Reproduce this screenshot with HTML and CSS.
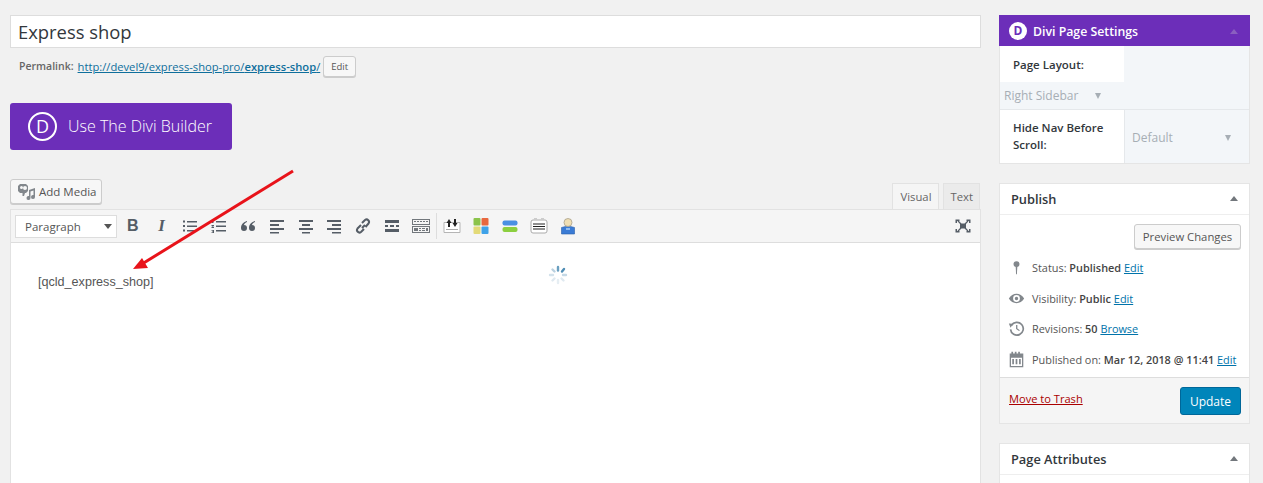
FILE: index.html
```html
<!DOCTYPE html>
<html lang="en">
<head>
  <meta charset="UTF-8" />
  <title>Edit Page</title>
  <link rel="stylesheet" href="styles.css">
</head>
<body>
  <div class="page">
    <!-- Main column -->
    <div class="main">
      <div class="title-box">Express shop</div>
      <div class="permalink">
        <b class="permalink-label">Permalink:</b>
        <a href="#">http://devel9/express-shop-pro/<b>express-shop</b>/</a>
        <span class="btn btn-small">Edit</span>
      </div>

      <div class="divi-btn">
        <span class="divi-logo">D</span>
        <span>Use The Divi Builder</span>
      </div>

      <div class="editor-top">
        <span class="btn btn-media">
          <svg width="20" height="18" viewBox="0 0 20 18"><path fill="#82878c" fill-rule="evenodd" d="M3 1h6l2 2v5l-2 2H8l-1 3H5.500v-3H3L1 8V3zm1.500 2a1.500 1.500 0 1 0 0 3 1.500 1.500 0 0 0 0-3zm3.500 0a2 2 0 1 0 0 4 2 2 0 0 0 0-4z"/><path fill="#82878c" d="M12 7l6-2v9a2 2 0 1 1-1.500-1.900V7.500L13.500 8.500V15a2 2 0 1 1-1.500-1.900z"/></svg>
          Add Media
        </span>
        <div class="tabs">
          <span class="tab tab-on">Visual</span>
          <span class="tab">Text</span>
        </div>
      </div>

      <div class="editor">
        <div class="toolbar">
          <div class="format-select">Paragraph<i class="caret"></i></div>
          <span class="tool tool-b">B</span>
          <span class="tool tool-i">I</span>
          <svg class="tool" viewBox="0 0 20 20"><path d="M7 5h10v1.500H7zM7 9.500h10V11H7zM7 14h10v1.500H7zM3 4.500h2v2H3zM3 9h2v2H3zM3 13.500h2v2H3z"/></svg>
          <svg class="tool" viewBox="0 0 20 20"><path d="M7 5h10v1.500H7zM7 9.500h10V11H7zM7 14h10v1.500H7zM3 4h1.500v3H3zM2.500 9h2.500v1l-1.500 1H5v1H2.500v-1L4 10H2.500zM2.500 14H5v3H2.500v-.8h1.500v-.4h-1v-.6h1v-.4H2.500z"/></svg>
          <svg class="tool" viewBox="0 0 20 20"><path d="M9 5C5.500 6 3 8.500 3 12a3 3 0 1 0 3-3c.3-1.200 1.500-2.300 3-3zM17 5c-3.500 1-6 3.500-6 7a3 3 0 1 0 3-3c.3-1.200 1.500-2.300 3-3z"/></svg>
          <svg class="tool" viewBox="0 0 20 20"><path d="M3 4h14v2H3zM3 8h9v2H3zM3 12h14v2H3zM3 16h9v1.500H3z"/></svg>
          <svg class="tool" viewBox="0 0 20 20"><path d="M3 4h14v2H3zM6 8h8v2H6zM3 12h14v2H3zM6 16h8v1.500H6z"/></svg>
          <svg class="tool" viewBox="0 0 20 20"><path d="M3 4h14v2H3zM8 8h9v2H8zM3 12h14v2H3zM8 16h9v1.500H8z"/></svg>
          <svg class="tool" viewBox="0 0 20 20"><path fill="none" stroke="#555d66" stroke-width="2" d="M9 12l3-3M8 9l-3.500 3.500a2.500 2.500 0 0 0 3.500 3.500L11 13M9 7l3-3a2.500 2.500 0 0 1 3.500 3.500L12.500 11"/></svg>
          <svg class="tool" viewBox="0 0 20 20"><path d="M3 4h14v3H3zM3 9h3v2H3zM8 9h4v2H8zM14 9h3v2h-3zM3 13h14v3H3z"/></svg>
          <svg class="tool tool-kitchen" viewBox="0 0 20 20"><path d="M1 3h18v6H1zm1 1v4h16V4zM1 10h18v7H1zm1 1v5h16v-5z"/><path d="M3 5h2v1H3zM6 5h2v1H6zM9 5h2v1H9zM12 5h2v1h-2zM15 5h2v1h-2zM3 12h4v3H3zM8 12h2v1H8zM8 14h2v1H8zM11 12h3v1h-3zM11 14h3v1h-3zM15 12h2v3h-2z"/></svg>
          <span class="tool-sep"></span>
          <svg class="tool" viewBox="0 0 20 20"><path fill="#fff" stroke="#b5b5b5" d="M2 6.500h16v10H2z"/><path fill="#222" d="M6 3l-2.500 4H5v4h2V7h1.500zM12 11l2.500-4H13V3h-2v4H9.500z" transform="translate(1 0)"/><path fill="#aaa" d="M4 13h12v1H4z"/></svg>
          <svg class="tool" viewBox="0 0 20 20"><rect x="2.500" y="2" width="7" height="7.500" rx="1" fill="#8bc34a"/><rect x="10.500" y="2" width="7" height="7.500" rx="1" fill="#e8683f"/><rect x="2.500" y="10.500" width="7" height="7.500" rx="1" fill="#e3da78"/><rect x="10.500" y="10.500" width="7" height="7.500" rx="1" fill="#3fa2e8"/></svg>
          <svg class="tool" viewBox="0 0 20 20"><rect x="2.500" y="4.500" width="15" height="5" rx="2" fill="#4a90e2"/><rect x="2.500" y="11" width="15" height="5" rx="2" fill="#8ccf3f"/></svg>
          <svg class="tool" viewBox="0 0 20 20"><rect x="2" y="4" width="16" height="13" rx="2" fill="#fff" stroke="#aaa"/><path fill="#222" d="M4 7.500h12v1H4zM4 10h12v1H4zM4 12.500h12v1H4z"/><path fill="#ccc" d="M5 2h3v2H5zM12 2h3v2h-3z"/></svg>
          <svg class="tool" viewBox="0 0 20 20"><path fill="#3a7bd5" stroke="#2a5fa8" stroke-width=".6" d="M3.500 11.500l4-1h5l4 1v6.500h-13z"/><circle cx="10" cy="6.500" r="4" fill="#f0dfb4" stroke="#a8a08a" stroke-width=".8"/><path fill="#8fbcf0" d="M8 12h4v2H8z"/></svg>
          <svg class="tool tool-full" viewBox="0 0 20 20"><path d="M7 7.500h6v5H7z"/><path fill="none" stroke="#555d66" stroke-width="1.300" d="M5 5l3 3M15 5l-3 3M5 15l3-3M15 15l-3-3"/><path d="M2.500 3.500h4v1.500H4v2H2.500zM17.500 3.500h-4v1.500H16v2h1.500zM2.500 16.500h4V15H4v-2H2.500zM17.500 16.500h-4V15H16v-2h1.500z"/></svg>
        </div>
        <div class="editor-body">[qcld_express_shop]</div>
        <!-- Spinner -->
        <svg class="spinner" width="20" height="20" viewBox="0 0 20 20">
          <g stroke-width="2.400" stroke-linecap="round">
            <path stroke="#6a9fc0" d="M10 2v3.500"/>
            <path stroke="#4f8db5" d="M16 4l-2 2.500"/>
            <path stroke="#c5d9e6" d="M18 10h-3"/>
            <path stroke="#dfe9f0" d="M15.500 15.500l-2-2"/>
            <path stroke="#e6eef3" d="M10 18v-3"/>
            <path stroke="#dfe9f0" d="M4.500 15.500l2-2"/>
            <path stroke="#d3e2ec" d="M2 10h3"/>
            <path stroke="#b9d0df" d="M4.500 4.500l2 2"/>
          </g>
        </svg>
      </div>

      <!-- Red arrow drawn on the screenshot -->
      <svg class="arrow" width="180" height="110" viewBox="0 0 180 110">
        <path fill="none" stroke="#e8131a" stroke-width="3" d="M161 2L10 95"/>
        <path fill="#e8131a" d="M1 100L10 89l6 10z"/>
      </svg>
    </div>

    <!-- Sidebar -->
    <div class="side">
      <div class="box">
        <div class="box-head divi-head">
          <span class="divi-dot">D</span>
          <span class="divi-title">Divi Page Settings</span>
          <i class="up up-dim"></i>
        </div>
        <div class="layout-row">
          <div class="cell-label">Page Layout:</div>
          <div class="cell-blank"></div>
        </div>
        <div class="layout-select">
          <span>Right Sidebar</span><i class="down"></i>
        </div>
        <div class="nav-row">
          <div class="cell-label">Hide Nav Before Scroll:</div>
          <div class="cell-value"><span>Default</span><i class="down"></i></div>
        </div>
      </div>

      <div class="box">
        <div class="box-head">
          <span class="box-title">Publish</span>
          <i class="up"></i>
        </div>
        <div class="publish-body">
          <div class="preview-wrap"><span class="btn btn-preview">Preview Changes</span></div>
          <div class="pub-row">
            <svg class="pub-icon" viewBox="0 0 20 20"><circle cx="10" cy="6" r="3.500"/><path d="M9 8h2l-.500 10h-1z"/></svg>
            <span>Status: <b>Published</b> <a href="#">Edit</a></span>
          </div>
          <div class="pub-row">
            <svg class="pub-icon" viewBox="0 0 20 20"><path fill-rule="evenodd" d="M1 10c2-3.500 5.500-5.500 9-5.500s7 2 9 5.500c-2 3.500-5.500 5.500-9 5.500S3 13.500 1 10zm9-4a4 4 0 1 0 0 8 4 4 0 0 0 0-8zm0 2a2 2 0 1 1 0 4 2 2 0 0 1 0-4z"/></svg>
            <span>Visibility: <b>Public</b> <a href="#">Edit</a></span>
          </div>
          <div class="pub-row">
            <svg class="pub-icon" viewBox="0 0 20 20"><path fill="none" stroke="#82878c" stroke-width="2" d="M4 6.500A7.500 7.500 0 1 1 3 11"/><path d="M1 4l5 .5L3 9zM9.500 6H11v4l3 2-1 1-3.500-2.500z"/></svg>
            <span>Revisions: <b>50</b> <a href="#">Browse</a></span>
          </div>
          <div class="pub-row">
            <svg class="pub-icon" viewBox="0 0 20 20"><path fill-rule="evenodd" d="M2 3h2V1h2v2h2V1h2v2h2V1h2v2h2V1h0v2h2v16H2zm1.500 5v9.500h13V8zM5 9.500h2v6H5zM9 9.500h2v6H9zM13 9.500h2v6h-2z"/></svg>
            <span>Published on: <b>Mar 12, 2018 @ 11:41</b> <a href="#">Edit</a></span>
          </div>
        </div>
        <div class="publish-foot">
          <a href="#" class="trash">Move to Trash</a>
          <span class="update">Update</span>
        </div>
      </div>

      <div class="box">
        <div class="box-head">
          <span class="box-title">Page Attributes</span>
          <i class="up"></i>
        </div>
        <div class="attr-body"></div>
      </div>
    </div>
  </div>
</body>
</html>
```

FILE: styles.css
```css
html, body {
  margin: 0;
  height: 483px;
  overflow: hidden;
  background: #f1f1f1;
  font-family: "Open Sans", sans-serif;
  font-size: 12px;
  color: #444;
}

a {
  color: #0073aa;
  text-decoration: underline;
}

.page {
  display: flex;
  gap: 18px;
  padding: 15px 13px 0 10px;
}

.main {
  width: 971px;
  position: relative;
}

.side {
  width: 251px;
  display: flex;
  flex-direction: column;
  gap: 19px;
}

/* Title and permalink */
.title-box {
  height: 31px;
  line-height: 32px;
  padding-left: 7px;
  background: #fff;
  border: 1px solid #ddd;
  font-size: 18.400px;
  color: #32373c;
}

.permalink {
  display: flex;
  align-items: center;
  height: 24px;
  margin-top: 6px;
  padding-left: 9px;
  font-size: 11.200px;
  color: #666;
}

.permalink b {
  font-weight: 600;
}

.permalink-label {
  font-size: 10.500px;
}

.permalink a {
  margin-left: 4px;
  color: #0f6f9c;
}

.btn {
  display: inline-flex;
  align-items: center;
  box-sizing: border-box;
  background: #f7f7f7;
  border: 1px solid #ccc;
  border-radius: 3px;
  box-shadow: 0 1px 0 #ccc;
  color: #555;
}

.btn-small {
  height: 21px;
  margin-left: 3px;
  padding: 0 7px;
  font-size: 9.500px;
}

/* Divi button */
.divi-btn {
  display: flex;
  align-items: center;
  width: 222px;
  height: 47px;
  box-sizing: border-box;
  margin-top: 25px;
  padding: 0 0 1px 18px;
  gap: 11px;
  background: #6c2eb9;
  border-radius: 3px;
  color: #fff;
  font-size: 16px;
  font-weight: 300;
}

.divi-logo {
  width: 25px;
  height: 25px;
  line-height: 25px;
  border: 2px solid #fff;
  border-radius: 50%;
  text-align: center;
  font-size: 18px;
  font-weight: 400;
}

/* Editor */
.editor-top {
  display: flex;
  justify-content: space-between;
  align-items: flex-end;
  height: 30px;
  margin-top: 29px;
}

.btn-media {
  width: 92px;
  height: 25px;
  margin-bottom: 5px;
  padding-left: 6px;
  gap: 2px;
  font-size: 11.500px;
  color: #555;
}

.tabs {
  display: flex;
  gap: 4px;
  margin-right: 1px;
}

.tab {
  height: 25px;
  line-height: 26px;
  padding: 0 6px;
  background: #ebebeb;
  border: 1px solid #e2e2e2;
  border-bottom: 0;
  font-size: 11.300px;
  color: #666;
}

.tab-on {
  height: 26px;
  padding: 0 7px;
  background: #f5f5f5;
  margin-bottom: -1px;
}

.editor {
  border: 1px solid #e2e2e2;
  border-bottom: 0;
  background: #fff;
  height: 273px;
  position: relative;
}

.toolbar {
  display: flex;
  align-items: center;
  height: 32px;
  padding-left: 4px;
  gap: 8.800px;
  background: #f5f5f5;
  border-bottom: 1px solid #ddd;
}

.format-select {
  display: flex;
  align-items: center;
  justify-content: space-between;
  box-sizing: border-box;
  width: 102px;
  height: 23px;
  margin-right: -3px;
  padding: 0 4px 0 9px;
  background: #fff;
  border: 1px solid #ddd;
  font-size: 11.500px;
  color: #555;
}

.caret {
  border-left: 4px solid transparent;
  border-right: 4px solid transparent;
  border-top: 5px solid #555;
}

.tool {
  width: 20px;
  height: 20px;
  flex: none;
  fill: #555d66;
  text-align: center;
  line-height: 20px;
  color: #555d66;
}

.tool-b {
  font-family: "Liberation Sans", sans-serif;
  font-size: 16px;
  font-weight: 700;
}

.tool-i {
  font-family: "Liberation Serif", serif;
  font-size: 17px;
  font-weight: 700;
  font-style: italic;
}

.tool-kitchen {
  fill: #72777c;
}

.tool-sep {
  width: 1px;
  height: 26px;
  margin: 0 -3px 0 -4px;
  background: #ddd;
}

.tool-full {
  margin-left: auto;
  margin-right: 7px;
}

.editor-body {
  padding: 32px 0 0 27px;
  font-family: "Liberation Sans", sans-serif;
  font-size: 12.600px;
  color: #555;
}

.spinner {
  position: absolute;
  left: 537px;
  top: 55px;
}

.arrow {
  position: absolute;
  left: 122px;
  top: 154px;
}

/* Sidebar boxes */
.box {
  background: #fff;
  border: 1px solid #e5e5e5;
  box-sizing: border-box;
}

.box-head {
  display: flex;
  align-items: center;
  justify-content: space-between;
  box-sizing: border-box;
  height: 31px;
  padding: 0 11px 1px;
  border-bottom: 1px solid #eee;
}

.box-title {
  font-size: 12.800px;
  font-weight: 600;
  color: #32373c;
}

.up {
  border-left: 4px solid transparent;
  border-right: 4px solid transparent;
  border-bottom: 5px solid #72777c;
}

.up-dim {
  border-bottom-color: #8a5fc0;
  margin-left: auto;
}

.divi-head {
  height: 31px;
  background: #6c2eb9;
  border: 0;
  margin: -1px -1px 0;
  padding: 1px 12px 0 10px;
  gap: 6px;
  justify-content: flex-start;
}

.divi-dot {
  width: 18px;
  height: 18px;
  line-height: 18px;
  border-radius: 50%;
  background: #fff;
  color: #6c2eb9;
  text-align: center;
  font-size: 12px;
  font-weight: 700;
}

.divi-title {
  color: #fff;
  font-size: 12.300px;
  font-weight: 600;
}

.layout-row,
.nav-row {
  display: grid;
  grid-template-columns: 124px 1fr;
}

.layout-row {
  height: 36px;
}

.cell-label {
  padding: 10px 10px 10px 13px;
  font-size: 11.500px;
  line-height: 17px;
  font-weight: 600;
  color: #32373c;
}

.cell-blank {
  background: #f3f6f9;
}

.layout-select {
  display: flex;
  align-items: center;
  height: 27px;
  padding-left: 4px;
  background: #f3f6f9;
  border-bottom: 1px solid #e5e8eb;
  color: #a7aeb5;
  font-size: 12px;
}

.layout-select .down {
  margin-left: 17px;
}

.down {
  border-left: 3.500px solid transparent;
  border-right: 3.500px solid transparent;
  border-top: 6px solid #a7aeb5;
}

.nav-row {
  height: 53px;
}

.nav-row .cell-label {
  padding-top: 9px;
}

.cell-value {
  display: flex;
  align-items: center;
  justify-content: space-between;
  padding: 2px 18px 0 7px;
  background: #f3f6f9;
  border-left: 1px solid #e5e8eb;
  color: #a7aeb5;
  font-size: 12px;
}

/* Publish */
.publish-body {
  height: 162px;
  box-sizing: border-box;
  padding: 9px 8px 0 8px;
}

.preview-wrap {
  display: flex;
  justify-content: flex-end;
  margin-bottom: 3px;
}

.btn-preview {
  width: 107px;
  height: 25px;
  justify-content: center;
  font-size: 11.300px;
  color: #555;
}

.pub-row {
  display: flex;
  align-items: center;
  gap: 7px;
  height: 30.700px;
  font-size: 10.900px;
  color: #555;
  white-space: nowrap;
}

.pub-row b {
  font-weight: 600;
  color: #444;
}

.pub-icon {
  width: 17px;
  height: 17px;
  flex: none;
  fill: #82878c;
}

.publish-foot {
  display: flex;
  align-items: center;
  justify-content: space-between;
  height: 45px;
  padding: 0 8px 0 9px;
  background: #f5f5f5;
  border-top: 1px solid #ddd;
}

.trash {
  margin-bottom: 4px;
  color: #a00;
  font-size: 11.100px;
}

.update {
  width: 61px;
  height: 28px;
  line-height: 27px;
  text-align: center;
  background: #0085ba;
  border: 1px solid #006799;
  box-sizing: border-box;
  border-radius: 3px;
  color: #fff;
  font-size: 12px;
}

.attr-body {
  height: 8px;
}
```
